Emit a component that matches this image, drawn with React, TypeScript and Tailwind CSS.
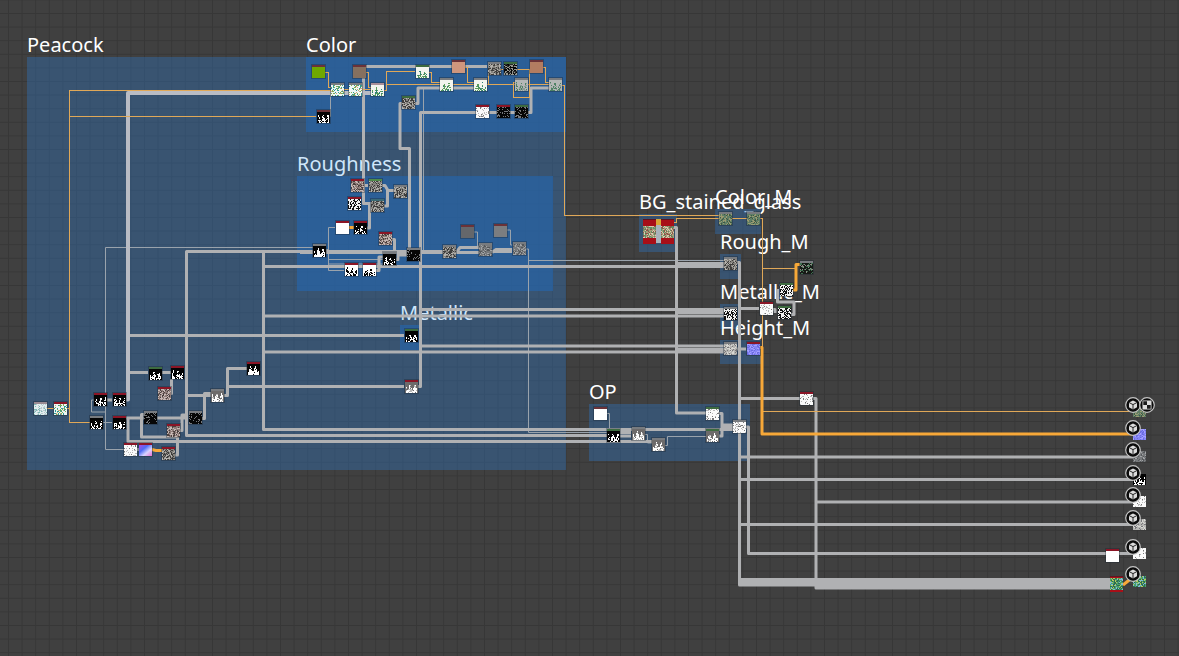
import React from "react";

type Frame = { title: string; box: string; fill: string; text: string };

const frames: Frame[] = [
  { title: "Peacock", box: "left-[27px] top-[57px] w-[539px] h-[413px]", fill: "bg-[#2f6fb5]/42", text: "text-white" },
  { title: "Color", box: "left-[306px] top-[57px] w-[260px] h-[75px]", fill: "bg-[#2468b0]/60", text: "text-white" },
  { title: "Roughness", box: "left-[297px] top-[176px] w-[256px] h-[115px]", fill: "bg-[#2468b0]/60", text: "text-[#cfe6fb]" },
  { title: "Metallic", box: "left-[400px] top-[325px] w-[20px] h-[25px]", fill: "bg-[#2468b0]/60", text: "text-[#cfe6fb]" },
  { title: "BG_stained_glass", box: "left-[639px] top-[214px] w-[38px] h-[38px]", fill: "bg-[#2f6fb5]/42", text: "text-white" },
  { title: "Color_M", box: "left-[715px] top-[209px] w-[46px] h-[25px]", fill: "bg-[#2f6fb5]/42", text: "text-white" },
  { title: "Rough_M", box: "left-[720px] top-[254px] w-[21px] h-[25px]", fill: "bg-[#2f6fb5]/42", text: "text-white" },
  { title: "Metallic_M", box: "left-[720px] top-[304px] w-[21px] h-[25px]", fill: "bg-[#2f6fb5]/42", text: "text-white" },
  { title: "Height_M", box: "left-[720px] top-[340px] w-[41px] h-[24px]", fill: "bg-[#2f6fb5]/42", text: "text-white" },
  { title: "OP", box: "left-[589px] top-[404px] w-[161px] h-[57px]", fill: "bg-[#2f6fb5]/42", text: "text-white" },
];

const thick = [
  // main trunks on the left
  "M127.5 372.5H148", "M127.5 335.5H404",
  "M443 251.5H186.5V435.5H607", "M263.5 251.5V429.5H733", "M263.5 266.5H724",
  "M263.5 316H724", "M263.5 352H724", "M186.5 395.5H211",
  "M125 418H128V441.5H652", "M127 418H188", "M144 414.5H141.5V437H166",
  "M175 455H177.5V437H166", "M179 430.5H182V415H188", "M201 418.5H204.5V393.5H211",
  "M224 395.5H227.5V368.5H247", "M227.5 386.5H404", "M107 400H112",
  "M161 372.5H171", "M170 393.5H171.5V379", "M137 449.5H139",
  // colour group
  "M487 66.5H363.5V203.5H371", "M402 103.5H400V148.5H409.5V248", "M415 103.5H418V88H440",
  "M476 112.5H420.5V386.5H417", "M489 112.5H497", "M510 112.5H515", "M528 112.5H531V88H549",
  "M453 88H474",
  // roughness group
  "M381 185.5H385L388 190.5H394", "M384 206H387.5V190", "M367 228H369.5V205H371",
  "M363 185.5H368", "M391 239.5H394.5V253", "M375 270.5H379V257H383",
  "M456 253L460 247.5H479", "M456 252.5H479", "M492 252.5L496 249.5H512", "M492 251.5H512", "M396 259.5H398V255H407",
  "M300 252.5H443",
  // middle
  "M420 309.5H724", "M420 346H724", "M674 227.5H676.5V413H706",
  "M676 263.5H724", "M676 312.5H724", "M676 349.5H724",
  "M779 290.5H777.5V302H794V314.5H786", "M737 262.5H739.5V585H1110", "M739 308.5H759",
  "M772 309.5H775V313", "M737 349H746", "M739 398.5H800",
  "M813 398.5H816V588H1110", "M746 427H748.5V553.5H1133",
  "M739 457H1133", "M739 479.5H1133", "M816 502H1133", "M739 524.5H1133",
  "M739 579.5H1110", "M739 582H1110", "M816 585H1110",
  "M719 413.5H722V436H719", "M722 425H733", "M722 427.5H733", "M620 436H631", "M620 432.5H631",
];

const heavy = ["M125 399.5H128V93H371"];

const thin = [
  "M124 449.5H105.5V247.5H313", "M94 400H91.5V412H105", "M103 422.5H112",
  "M329 116.5H330.5V92", "M423.5 88V250", "M335 227.5H328.5V270.5H344",
  "M326 249.5H328.5", "M328 259.5H383", "M328 264H383", "M474 232H477.5V246H479",
  "M507 230H510.5V245H512", "M525 249H528.5V432.5H607", "M528 260.5H724",
  "M606 413.5H609.5V429", "M644 434.5H647.5V443H652", "M665 445.5H667.5V436.5H706",
];

const thinOrange = [
  "M47 408.5H54", "M67 408.5H69.5V90.5H331", "M69.5 90V422.5H90", "M69.5 116.5H316",
  "M344 89.5H371", "M325 72.5H328.5V87.5H331", "M366 72.5H368.5V87.5H371",
  "M384 90.5H386.5V71.5H415", "M386 84.5H549", "M428 72.5H431.5V82.5H440",
  "M465 67.5H467.5V82.5H474", "M487 84.5H488.5V69", "M500 69.5H503",
  "M516 69.5H529.5V97.5H513.5V82.5H515", "M543 67.5H545.5V82.5H549",
  "M562 85.5H564.5V215.5H719", "M674 222.5H676.5V218.5H719", "M732 218.5H747",
  "M760 218.5H762.5V348", "M762 268.5H797", "M762 411.5H1133",
];

const thickOrange = [
  "M348 227.5H354", "M152 449.5L156 450.5H162", "M759 347.5H762V434H1133",
  "M792 290H796V264.5H801", "M1123 585L1133 577",
];

type Look = { base: string; inks: [string, number][]; blob?: boolean };

const looks: Record<string, Look> = {
  lime: { base: "#6fa800", inks: [] },
  taupe: { base: "#85705f", inks: [] },
  peach: { base: "#cf967d", inks: [] },
  clay: { base: "#b27c61", inks: [] },
  slate: { base: "#65676b", inks: [] },
  stone: { base: "#7b7d80", inks: [] },
  blank: { base: "#ffffff", inks: [] },
  feather: { base: "#eef5f3", inks: [["#2f9b94", 0.18], ["#7faa52", 0.14], ["#c9a87c", 0.08]] },
  meadow: { base: "#f2f4ee", inks: [["#5b9b5b", 0.4], ["#2f7f7a", 0.15]], blob: true },
  moss: { base: "#b4b7b6", inks: [["#4e8264", 0.35], ["#8c9b97", 0.3]], blob: true },
  pale: { base: "#e2eeee", inks: [["#7db8b5", 0.2], ["#b9c9cf", 0.2]] },
  grey: { base: "#85837e", inks: [["#3e3d3c", 0.33], ["#b4b2ad", 0.27]] },
  rose: { base: "#8f7c78", inks: [["#4a403e", 0.25], ["#c6b8b4", 0.3]] },
  dim: { base: "#77797b", inks: [["#55585b", 0.25], ["#a2a4a6", 0.2]] },
  dark: { base: "#2b2c2b", inks: [["#95968f", 0.35], ["#050505", 0.3]] },
  night: { base: "#060606", inks: [["#75777a", 0.22]] },
  mask: { base: "#040404", inks: [["#ffffff", 0.55]], blob: true },
  peak: { base: "#050505", inks: [["#ffffff", 0.9]], blob: true },
  fog: { base: "#6d6b6b", inks: [["#ffffff", 0.6], ["#b9b9b9", 0.3]], blob: true },
  cut: { base: "#ffffff", inks: [["#060606", 0.5]], blob: true },
  snow: { base: "#fafafa", inks: [["#b9b9b9", 0.15], ["#777777", 0.08]] },
  salt: { base: "#f1f1f1", inks: [["#111111", 0.45]] },
  silver: { base: "#b5b5b2", inks: [["#77777a", 0.22], ["#d8d8d4", 0.25]] },
  fern: { base: "#5f7e66", inks: [["#9a9a70", 0.3], ["#3d5844", 0.2]] },
  forest: { base: "#161a16", inks: [["#3f7050", 0.25], ["#8b8b84", 0.14]] },
  violet: { base: "#8585f6", inks: [["#6c6ce0", 0.25], ["#a5a0ff", 0.25]] },
  mosaic: { base: "#a79b79", inks: [["#5f9166", 0.25], ["#d9ccb0", 0.2], ["#8e5548", 0.2]] },
  glass: { base: "#4ba06b", inks: [["#7fb9d8", 0.22], ["#2c6e52", 0.25], ["#b5c95c", 0.18]] },
};

const R = "#8b1526";
const D = "#6b3238";
const G = "#3d6b3f";
const S = "#787b7f";
const N = "none";

const nodes: [number, number, string, string][] = [
  [312, 65, D, "lime"], [353, 65, D, "taupe"], [416, 65, G, "meadow"], [452, 60, D, "peach"],
  [488, 62, S, "grey"], [504, 62, G, "dark"], [530, 60, D, "clay"],
  [331, 83, S, "feather"], [349, 83, S, "feather"], [371, 83, "#a98f99", "meadow"],
  [440, 78, S, "meadow"], [474, 78, S, "meadow"], [515, 78, S, "moss"], [549, 78, S, "moss"],
  [317, 110, D, "mask"], [402, 96, G, "grey"], [476, 105, R, "snow"], [497, 105, R, "night"], [515, 105, G, "night"],
  [351, 179, R, "rose"], [369, 179, "#4f8a4a", "grey"], [394, 185, S, "grey"], [348, 197, R, "salt"],
  [371, 199, "#3b6a75", "grey"], [336, 221, R, "blank"], [354, 221, R, "mask"], [379, 232, R, "rose"],
  [313, 244, S, "peak"], [383, 252, S, "mask"], [407, 248, S, "night"], [345, 263, R, "cut"], [363, 263, R, "cut"],
  [443, 245, S, "grey"], [461, 225, D, "slate"], [494, 224, D, "stone"], [479, 243, S, "dim"], [513, 242, S, "dim"],
  [34, 402, "#9a8b93", "pale"], [54, 402, R, "feather"], [94, 393, R, "mask"], [113, 393, R, "mask"],
  [149, 367, G, "mask"], [171, 366, R, "mask"], [158, 387, R, "rose"], [90, 416, S, "mask"], [113, 416, R, "mask"],
  [144, 411, S, "night"], [167, 424, R, "rose"], [189, 411, S, "night"], [211, 389, S, "fog"], [247, 362, R, "peak"],
  [124, 443, R, "snow"], [139, 443, R, "normal"], [162, 447, R, "grey"],
  [405, 329, G, "mask"], [405, 380, R, "fog"],
  [719, 212, S, "fern"], [747, 212, S, "fern"], [724, 257, S, "grey"], [800, 261, S, "forest"], [780, 283, G, "salt"],
  [760, 302, R, "snow"], [778, 306, G, "salt"], [724, 307, S, "salt"], [724, 342, S, "silver"], [747, 342, R, "violet"],
  [594, 407, D, "blank"], [607, 429, G, "mask"], [632, 427, S, "fog"], [652, 438, S, "fog"],
  [706, 407, G, "snow"], [706, 429, G, "fog"], [733, 420, S, "snow"], [800, 392, R, "snow"],
  [1133, 404, N, "fern"], [1133, 427, N, "violet"], [1133, 449, N, "dim"], [1133, 472, N, "mask"],
  [1133, 494, N, "snow"], [1133, 517, N, "silver"], [1133, 546, N, "snow"], [1133, 574, N, "glass"],
  [1106, 549, R, "blank"],
];

function rand(a: number, b: number, c: number) {
  let h = (a * 374761393 + b * 668265263 + c * 2147483647) | 0;
  h = Math.imul(h ^ (h >>> 13), 1274126177);
  h = Math.imul(h ^ (h >>> 16), 2246822519);
  return ((h ^ (h >>> 15)) >>> 0) / 4294967296;
}

function Thumb({ x, y, w, h, look }: { x: number; y: number; w: number; h: number; look: Look }) {
  const paths = look.inks.map(() => "");
  for (let j = 0; j < h; j++) {
    for (let i = 0; i < w; i++) {
      if (look.blob) {
        const wave = 0.42 + 0.25 * Math.sin((i + x) * 1.3);
        if (j < h * wave || i === 0 || i === w - 1) continue;
      }
      let roll = rand(i + x, j + y, 7);
      for (let k = 0; k < look.inks.length; k++) {
        if (roll < look.inks[k][1]) {
          paths[k] += `M${x + i} ${y + j}h1v1h-1z`;
          break;
        }
        roll -= look.inks[k][1];
      }
    }
  }
  return (
    <>
      <rect x={x} y={y} width={w} height={h} fill={look.base} />
      {paths.map((d, k) => (
        <path key={k} d={d} fill={look.inks[k][0]} />
      ))}
    </>
  );
}

function Node({ x, y, bar, kind }: { x: number; y: number; bar: string; kind: string }) {
  return (
    <g shapeRendering="crispEdges">
      {bar !== N && <rect x={x - 1} y={y - 1} width="15" height="15" fill="#1b2430" opacity="0.35" />}
      {bar !== N && <rect x={x} y={y} width="13" height="3" fill={bar} />}
      {kind === "normal" ? (
        <rect x={x} y={y + 2} width="13" height="11" fill="url(#normal)" />
      ) : (
        <Thumb x={x} y={y + 2} w={13} h={11} look={looks[kind]} />
      )}
    </g>
  );
}

function GlassTile({ x, y, h, kind }: { x: number; y: number; h: number; kind: string }) {
  return (
    <g shapeRendering="crispEdges">
      <rect x={x} y={y} width="13" height={h} fill="#a80f18" />
      <rect x={x} y={y} width="13" height="1" fill="#5d1620" />
      <Thumb x={x} y={y + Math.round((h - 12) / 2)} w={13} h={12} look={looks[kind]} />
    </g>
  );
}

function CubeBadge({ x, y }: { x: number; y: number }) {
  return (
    <g transform={`translate(${x} ${y})`}>
      <circle r="7.3" fill="#0b0b0b" stroke="#c4c4c4" strokeWidth="1.2" />
      <path d="M0-4.6 4-2.5V2.3L0 4.6-4 2.3V-2.5Z" fill="#dcdcdc" />
      <path d="M-4-2.5 0-.4 4-2.5M0-.4V4.6" fill="none" stroke="#111" strokeWidth="0.9" />
    </g>
  );
}

function CheckerBadge({ x, y }: { x: number; y: number }) {
  return (
    <g transform={`translate(${x} ${y})`}>
      <circle r="7.3" fill="#0b0b0b" stroke="#c4c4c4" strokeWidth="1.2" />
      <rect x="-4.5" y="-4.5" width="9" height="9" fill="#dcdcdc" />
      <path d="M-3.7-3.7H0V0H-3.7zM0 0H3.7V3.7H0z" fill="#1a1a1a" />
    </g>
  );
}

const badgeRows = [405, 428, 450, 473, 495, 518, 547, 574];

export default function App() {
  return (
    <main className="relative min-h-screen w-full overflow-hidden bg-[#404040] font-['Noto_Sans',sans-serif]">
      <svg className="absolute inset-0 h-full w-full" aria-hidden="true">
        <defs>
          <pattern id="grid" x="8" y="13" width="13.6" height="13.6" patternUnits="userSpaceOnUse">
            <path d="M.5 0V13.6M0 .5H13.6" stroke="#373737" strokeWidth="1" fill="none" />
          </pattern>
        </defs>
        <rect width="100%" height="100%" fill="url(#grid)" />
      </svg>

      {frames.map((f) => (
        <section key={f.title} className={`absolute ${f.box} ${f.fill}`}>
          <h2 className={`absolute bottom-full left-0 text-xl leading-6 whitespace-nowrap ${f.text}`}>{f.title}</h2>
        </section>
      ))}

      <svg className="absolute inset-0 h-full w-full" role="img" aria-label="Material node graph">
        <defs>
          <linearGradient id="normal" x1="0" y1="0" x2="1" y2="1">
            <stop offset="0" stopColor="#b04ae0" />
            <stop offset="0.35" stopColor="#4f6cf5" />
            <stop offset="0.65" stopColor="#d9d4ff" />
            <stop offset="1" stopColor="#e86fd0" />
          </linearGradient>
        </defs>
        <g fill="none" strokeLinejoin="round">
          <path d={thin.join("")} stroke="#9aa3ac" strokeWidth="1" />
          <path d={thick.join("")} stroke="#b0b1b3" strokeWidth="3" />
          <path d={heavy.join("")} stroke="#b9bcc4" strokeWidth="4" />
          <path d={thinOrange.join("")} stroke="#e0a858" strokeWidth="1" shapeRendering="crispEdges" />
          <path d={thickOrange.join("")} stroke="#f7a838" strokeWidth="3" />
        </g>
        <rect x="656" y="219" width="5" height="6" fill="#d9a636" />
        <rect x="656" y="225" width="5" height="18" fill="#a9b3bb" />
        <GlassTile x={643} y={219} h={25} kind="mosaic" />
        <GlassTile x={661} y={219} h={25} kind="mosaic" />
        <GlassTile x={1110} y={576} h={16} kind="glass" />
        {nodes.map(([x, y, bar, kind]) => (
          <Node key={`${x}-${y}`} x={x} y={y} bar={bar} kind={kind} />
        ))}
        {badgeRows.map((y) => (
          <CubeBadge key={y} x={1133} y={y} />
        ))}
        <CheckerBadge x={1147} y={405} />
      </svg>
    </main>
  );
}
